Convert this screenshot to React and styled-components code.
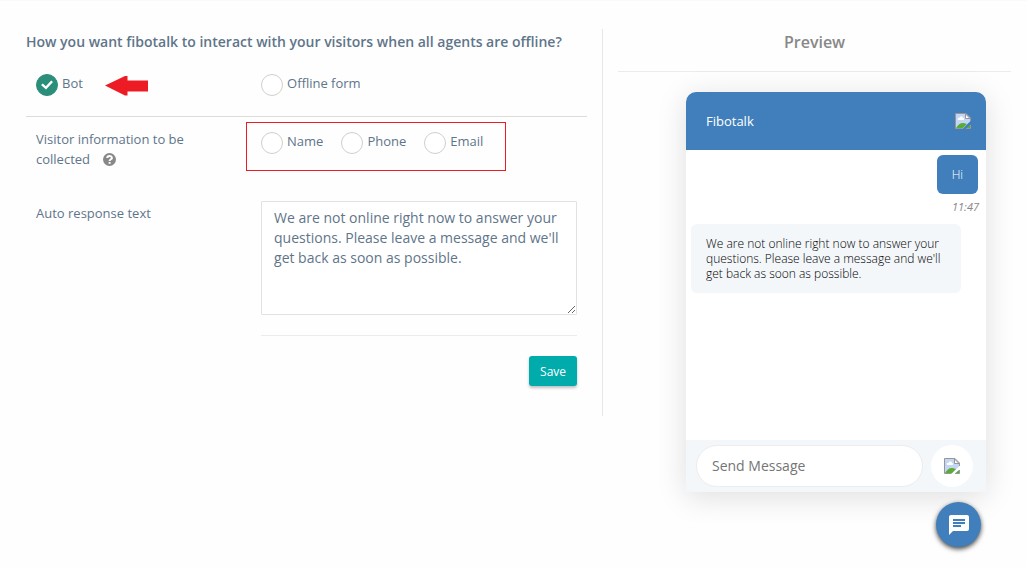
import { useState } from "react";
import styled, { createGlobalStyle, css } from "styled-components";

const GlobalStyle = createGlobalStyle`
  *,
  *::before,
  *::after {
    box-sizing: border-box;
  }
  body {
    margin: 0;
    background-color: #fefefe;
    border-top: 1px solid #fafafa;
    color: #5f758a;
    font-family: "Open Sans", "Noto Sans", sans-serif;
    font-size: 13px;
    line-height: 20px;
  }
  button,
  input,
  textarea {
    font-family: inherit;
    color: inherit;
  }
`;

const Page = styled.main`
  display: grid;
  grid-template-columns: 7fr 5fr;
  align-items: start;
  padding: 28px 1px 20px 11px;
`;

const Settings = styled.form`
  min-height: 387px;
  padding: 0 15px;
  border-right: 1px solid #e6e6e6;
`;

const Title = styled.h2`
  margin: 0;
  padding-top: 3px;
  font-size: 14px;
  font-weight: 600;
  line-height: 20px;
`;

const Row = styled.div`
  display: grid;
  grid-template-columns: 225fr 336fr;
  & > * {
    min-width: 0;
    margin: 0 10px;
  }
`;

const ModeRow = styled(Row)`
  padding: 22px 0 20px;
  border-bottom: 1px solid #dcdcdc;
`;

const Flag = styled.div`
  display: flex;
  align-items: center;
  gap: 22px;
  & > svg {
    margin-top: 2px;
  }
`;

const CheckLabel = styled.label`
  display: flex;
  align-items: flex-start;
  gap: 4px;
  line-height: 18px;
  cursor: pointer;
`;

const Check = styled.input`
  appearance: none;
  display: grid;
  place-items: center;
  width: 22px;
  height: 22px;
  margin: 0;
  border: 1px solid #d0d0c8;
  border-radius: 50%;
  background-color: #fff;
  cursor: pointer;

  &:checked {
    border-color: #2b8e7a;
    background-color: #2b8e7a;
  }
  &:checked::before {
    content: "";
    width: 12px;
    height: 10px;
    background-color: #fff;
    clip-path: polygon(0 50%, 15% 34%, 40% 62%, 85% 6%, 100% 20%, 42% 96%);
  }
`;

const CollectRow = styled(Row)`
  padding-top: 5px;
`;

const RowLabel = styled.div`
  padding: 7px 10px 0 0;
  & > svg {
    margin-left: 13px;
    vertical-align: -2px;
  }
`;

const Fields = styled.div`
  display: flex;
  justify-self: start;
  gap: 18px;
  height: 49px;
  margin-left: -5px;
  padding: 9px 22px 0 14px;
  border: 1px solid #ed1c24;
`;

const TextRow = styled(Row)`
  padding-top: 30px;
`;

const TextLabel = styled.label`
  padding-top: 2px;
`;

const Response = styled.textarea`
  display: block;
  width: 100%;
  height: 114px;
  padding: 6px 12px;
  border: 1px solid #e2e2e2;
  border-radius: 1px;
  background-color: #fff;
  font-size: 14px;
  line-height: 20px;
  outline: none;
`;

const Actions = styled.div`
  display: flex;
  justify-content: flex-end;
  margin-top: 20px;
  padding-top: 20px;
  border-top: 1px solid #ebebeb;
`;

const Save = styled.button`
  height: 30px;
  padding: 0 11px;
  border: 0;
  border-radius: 3px;
  background-color: #00abac;
  box-shadow: 0 2px 3px rgba(0, 0, 0, 0.25);
  color: #fff;
  font-size: 12px;
  font-weight: 500;
  cursor: pointer;
`;

const Preview = styled.section`
  display: flex;
  flex-direction: column;
  padding: 0 15px;
`;

const PreviewTitle = styled.h3`
  margin: 0;
  padding: 3px 0 19px;
  border-bottom: 1px solid #ebebeb;
  color: #888;
  font-size: 16px;
  font-weight: 600;
  line-height: 20px;
  text-align: center;
`;

const Widget = styled.div`
  display: flex;
  flex-direction: column;
  align-self: flex-end;
  width: 300px;
  margin: 20px 25px 0 0;
  border-radius: 10px 10px 0 0;
  background-color: #fff;
  box-shadow: 0 5px 30px rgba(0, 0, 0, 0.13);
`;

const WidgetHeader = styled.header`
  display: flex;
  align-items: center;
  justify-content: space-between;
  height: 58px;
  padding: 0 15px 0 20px;
  border-radius: 10px 10px 0 0;
  background-color: #407fbc;
  color: #fff;
`;

const IconButton = styled.button`
  display: grid;
  place-items: center;
  flex: none;
  padding: 0;
  border: 0;
  background: none;
  cursor: pointer;

  ${({ $round }) =>
    $round &&
    css`
      width: 42px;
      height: 42px;
      border-radius: 50%;
      background-color: #fff;
    `}
`;

const Messages = styled.div`
  display: flex;
  flex-direction: column;
  height: 290px;
  padding: 5px;
`;

const Bubble = styled.p`
  margin: 0;
  border-radius: 6px;
  font-size: 12px;
  font-weight: 300;
  line-height: 15px;

  ${({ $sent }) =>
    $sent
      ? css`
          align-self: flex-end;
          margin-right: 3px;
          padding: 12px 15px;
          background-color: #407fbc;
          color: #fff;
        `
      : css`
          width: 270px;
          margin-top: 7px;
          padding: 12px 15px;
          background-color: #f3f7fa;
          color: #000;
        `}
`;

const Time = styled.time`
  align-self: flex-end;
  margin: 3px 2px 0 0;
  color: #888;
  font-size: 11px;
  font-style: italic;
`;

const Composer = styled.div`
  display: flex;
  align-items: center;
  gap: 8px;
  height: 52px;
  padding: 0 13px 0 10px;
  background-color: #f3f7fa;
`;

const MessageInput = styled.input`
  flex: 1;
  min-width: 0;
  height: 42px;
  padding: 0 15px 2px;
  border: 1px solid #ebedef;
  border-radius: 21px;
  background-color: #fff;
  font-size: 14px;
  outline: none;
  &::placeholder {
    color: #757575;
  }
`;

const Launcher = styled.button`
  display: grid;
  place-items: center;
  align-self: flex-end;
  width: 45px;
  height: 45px;
  margin: 10px 30px 0 0;
  padding: 0;
  border: 0;
  border-radius: 50%;
  background-color: #407fbc;
  box-shadow: 0 2px 5px rgba(0, 0, 0, 0.75);
  cursor: pointer;
`;

const ArrowIcon = () => (
  <svg width="43" height="20" viewBox="0 0 43 20" aria-hidden="true">
    <path d="M0 9.5 20 0H22.5V4.5H43V15.5H22.5V19.5H20Z" fill="#ed1c24" />
  </svg>
);

const HelpIcon = () => (
  <svg width="13" height="13" viewBox="0 0 13 13" role="img" aria-label="Help">
    <circle cx="6.5" cy="6.5" r="6.5" fill="#888" />
    <path
      d="M4.2 5C4.3 2.4 8.9 2.4 8.9 4.9 8.9 6.3 6.6 6.3 6.6 8"
      fill="none"
      stroke="#fff"
      strokeWidth="2"
    />
    <rect x="5.6" y="9" width="2" height="1.8" fill="#fff" />
  </svg>
);

const PictureIcon = () => (
  <svg width="16" height="16" viewBox="0 0 16 16" aria-hidden="true">
    <path d="M.5.5H11L15.5 5V8L8 15.5H.5Z" fill="#c3d6f6" />
    <path d="M3 7C2 5.5 4 4.5 4.5 5 5 3 8 3.2 8 5 9.5 5 9.5 7 8.5 7Z" fill="#fff" />
    <path d="M1 15C3 11.5 6 9.5 8.5 10L12 11 8 15Z" fill="#5bac32" />
    <path d="M11.5 15 15 12V15Z" fill="#5bac32" />
    <path
      d="M.5 15.5V.5H11L15.5 5V8M.5 15.5H7.5M11 15.5H15.5V12"
      fill="none"
      stroke="#979797"
    />
    <path d="M10.5 1V5.5H15Z" fill="#fff" stroke="#979797" />
  </svg>
);

const ChatIcon = () => (
  <svg width="24" height="24" viewBox="0 0 24 24" aria-hidden="true">
    <path
      d="M20 2H4c-1.1 0-2 .9-2 2v18l4-4h14c1.1 0 2-.9 2-2V4c0-1.1-.9-2-2-2zM6 9h12v2H6V9zm8 5H6v-2h8v2zm4-6H6V6h12v2z"
      fill="#fff"
    />
  </svg>
);

const contactFields = ["Name", "Phone", "Email"];

const App = () => {
  const [mode, setMode] = useState("bot");
  const [response, setResponse] = useState(
    "We are not online right now to answer your questions. Please leave a message and we'll get back as soon as possible."
  );

  return (
    <>
      <GlobalStyle />
      <Page>
        <Settings onSubmit={(event) => event.preventDefault()}>
          <Title>
            How you want fibotalk to interact with your visitors when all agents
            are offline?
          </Title>
          <ModeRow>
            <Flag>
              <CheckLabel>
                <Check
                  type="radio"
                  name="mode"
                  checked={mode === "bot"}
                  onChange={() => setMode("bot")}
                />
                Bot
              </CheckLabel>
              <ArrowIcon />
            </Flag>
            <CheckLabel>
              <Check
                type="radio"
                name="mode"
                checked={mode === "form"}
                onChange={() => setMode("form")}
              />
              Offline form
            </CheckLabel>
          </ModeRow>

          <CollectRow>
            <RowLabel>
              <span id="collect-label">Visitor information to be collected</span>
              <HelpIcon />
            </RowLabel>
            <Fields role="group" aria-labelledby="collect-label">
              {contactFields.map((field) => (
                <CheckLabel key={field}>
                  <Check type="checkbox" name={field.toLowerCase()} />
                  {field}
                </CheckLabel>
              ))}
            </Fields>
          </CollectRow>

          <TextRow>
            <TextLabel htmlFor="response">Auto response text</TextLabel>
            <div>
              <Response
                id="response"
                spellCheck={false}
                value={response}
                onChange={(event) => setResponse(event.target.value)}
              />
              <Actions>
                <Save type="submit">Save</Save>
              </Actions>
            </div>
          </TextRow>
        </Settings>

        <Preview>
          <PreviewTitle>Preview</PreviewTitle>
          <Widget>
            <WidgetHeader>
              <span>Fibotalk</span>
              <IconButton type="button" aria-label="Close">
                <PictureIcon />
              </IconButton>
            </WidgetHeader>
            <Messages>
              <Bubble $sent>Hi</Bubble>
              <Time>11:47</Time>
              <Bubble>{response}</Bubble>
            </Messages>
            <Composer>
              <MessageInput
                type="text"
                placeholder="Send Message"
                aria-label="Send Message"
              />
              <IconButton type="button" $round aria-label="Send">
                <PictureIcon />
              </IconButton>
            </Composer>
          </Widget>
          <Launcher type="button" aria-label="Open chat">
            <ChatIcon />
          </Launcher>
        </Preview>
      </Page>
    </>
  );
};

export default App;
